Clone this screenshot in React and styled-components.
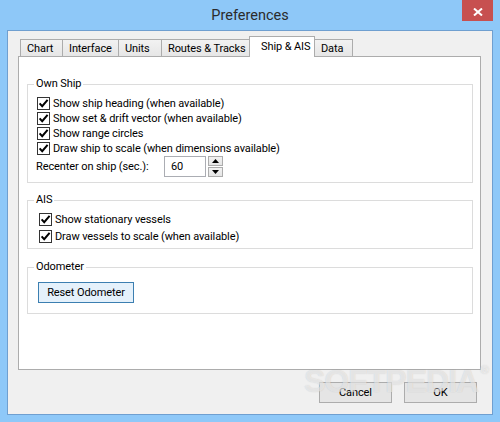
import React from "react";
import styled, { createGlobalStyle } from "styled-components";

const GlobalStyle = createGlobalStyle`
  html, body {
    margin: 0;
    padding: 0;
  }
  body {
    font-family: Roboto, "Noto Sans", sans-serif;
    font-size: 11px;
    letter-spacing: -0.1px;
    color: #000;
  }
  * {
    box-sizing: border-box;
  }
`;

const Frame = styled.div`
  position: relative;
  width: 500px;
  height: 422px;
  background: #8ec8f8;
  display: flex;
  flex-direction: column;
  overflow: hidden;
`;

const TitleBar = styled.div`
  height: 30px;
  display: grid;
  grid-template-columns: 1fr auto 1fr;
  align-items: start;
`;

const Title = styled.div`
  grid-column: 2;
  font-size: 14.5px;
  letter-spacing: 0;
  line-height: 31px;
  color: #2b2b2b;
`;

const CloseButton = styled.div`
  grid-column: 3;
  justify-self: end;
  width: 31px;
  height: 21px;
  margin-right: 7px;
  background: #c75050;
  display: flex;
  align-items: center;
  justify-content: center;
  padding-top: 2px;
`;

const Client = styled.div`
  height: 385px;
  margin: 0 7px 7px 7px;
  border: 1px solid #6f9fd0;
  background: #f0f0f0;
  padding: 5px 11px 11px 10px;
  display: flex;
  flex-direction: column;
`;

const TabStrip = styled.div`
  height: 20px;
  display: flex;
  align-items: flex-end;
  padding-left: 2px;
`;

const Tab = styled.div`
  position: relative;
  z-index: ${(p) => (p.$active ? 2 : 1)};
  width: ${(p) => p.$width}px;
  height: ${(p) => (p.$active ? 21 : 17)}px;
  margin-bottom: ${(p) => (p.$active ? -1 : 0)}px;
  margin-left: -1px;
  padding-left: ${(p) => (p.$active ? 11 : 6)}px;
  padding-bottom: ${(p) => (p.$active ? 2 : 0)}px;
  border: 1px solid #acacac;
  border-bottom: none;
  background: ${(p) =>
    p.$active ? "#ffffff" : "linear-gradient(#f2f2f2, #e6e6e6)"};
  display: flex;
  align-items: center;
  white-space: nowrap;

  &:first-child {
    margin-left: 0;
  }
`;

const Panel = styled.div`
  height: 314px;
  border: 1px solid #acacac;
  background: #ffffff;
  padding: 0 7px 0 8px;
  display: flex;
  flex-direction: column;
`;

const Group = styled.fieldset`
  margin: ${(p) => p.$top}px 0 0 0;
  padding: ${(p) => p.$padTop}px 8px ${(p) => p.$padBottom}px 8px;
  border: 1px solid #dcdcdc;
  min-width: 0;
`;

const Legend = styled.legend`
  padding: 0 2px;
  margin-left: -2px;
  line-height: 16px;
`;

const CheckRow = styled.label`
  display: flex;
  align-items: center;
  gap: 3px;
  height: ${(p) => p.$height}px;
  margin-left: ${(p) => p.$indent}px;
  white-space: nowrap;
`;

const Box = styled.span`
  width: 13px;
  height: 13px;
  border: 1px solid #333333;
  background: #ffffff;
  display: flex;
  align-items: center;
  justify-content: center;
  flex: none;
`;

const FieldRow = styled.div`
  display: flex;
  align-items: center;
  height: 21px;
`;

const FieldLabel = styled.span`
  width: 128px;
  white-space: nowrap;
`;

const NumberInput = styled.div`
  width: 42px;
  height: 21px;
  border: 1px solid #abadb3;
  padding-left: 6px;
  display: flex;
  align-items: center;
  background: #ffffff;
`;

const Spinner = styled.div`
  margin-left: 2px;
  display: flex;
  flex-direction: column;
  gap: 1px;
`;

const SpinButton = styled.div`
  width: 15px;
  height: 10px;
  border: 1px solid #acacac;
  background: linear-gradient(#f2f2f2, #e5e5e5);
  display: flex;
  align-items: center;
  justify-content: center;
`;

const ResetButton = styled.div`
  width: 96px;
  height: 21px;
  margin-left: 2px;
  border: 1px solid #3c7fb1;
  background: #e5f1fb;
  display: flex;
  align-items: center;
  justify-content: center;
`;

const Footer = styled.div`
  display: flex;
  justify-content: flex-end;
  gap: 12px;
  margin-top: 12px;
  padding-right: 4px;
`;

const DialogButton = styled.div`
  width: 73px;
  height: 21px;
  border: 1px solid #acacac;
  background: #e5e5e5;
  display: flex;
  align-items: center;
  justify-content: center;
`;

const Watermark = styled.div`
  position: absolute;
  left: 304px;
  top: 363px;
  font-family: "Liberation Sans", sans-serif;
  font-weight: 700;
  font-size: 32px;
  letter-spacing: -1px;
  color: rgba(255, 255, 255, 0.55);
  text-shadow: 0 0 1px rgba(120, 120, 120, 0.35);
  pointer-events: none;
  white-space: nowrap;

  sup {
    font-size: 12px;
    vertical-align: top;
    margin-left: 2px;
  }
`;

const tabs = [
  { name: "Chart", width: 43 },
  { name: "Interface", width: 57 },
  { name: "Units", width: 44 },
  { name: "Routes & Tracks", width: 89 },
  { name: "Ship & AIS", width: 66, active: true },
  { name: "Data", width: 39 },
];

const ownShip = [
  "Show ship heading (when available)",
  "Show set & drift vector (when available)",
  "Show range circles",
  "Draw ship to scale (when dimensions available)",
];

const ais = ["Show stationary vessels", "Draw vessels to scale (when available)"];

function Check() {
  return (
    <Box>
      <svg width="11" height="11" viewBox="0 0 11 11">
        <path
          d="M1.6 5.4 L4.2 8.2 L9.6 1.8"
          fill="none"
          stroke="#000"
          strokeWidth="2"
        />
      </svg>
    </Box>
  );
}

function Arrow({ up }) {
  return (
    <svg width="7" height="4" viewBox="0 0 7 4">
      <path d={up ? "M0 4 L3.5 0 L7 4 Z" : "M0 0 L3.5 4 L7 0 Z"} fill="#000" />
    </svg>
  );
}

export default function App() {
  return (
    <Frame>
      <GlobalStyle />
      <TitleBar>
        <Title>Preferences</Title>
        <CloseButton>
          <svg width="10" height="8" viewBox="0 0 10 8">
            <path d="M1 0.5 L9 7.5 M9 0.5 L1 7.5" stroke="#fff" strokeWidth="2" />
          </svg>
        </CloseButton>
      </TitleBar>
      <Client>
        <TabStrip>
          {tabs.map((t) => (
            <Tab key={t.name} $width={t.width} $active={t.active}>
              {t.name}
            </Tab>
          ))}
        </TabStrip>
        <Panel>
          <Group $top={19} $padTop={4} $padBottom={5}>
            <Legend>Own Ship</Legend>
            {ownShip.map((text) => (
              <CheckRow key={text} $height={15} $indent={1}>
                <Check />
                {text}
              </CheckRow>
            ))}
            <FieldRow>
              <FieldLabel>Recenter on ship (sec.):</FieldLabel>
              <NumberInput>60</NumberInput>
              <Spinner>
                <SpinButton>
                  <Arrow up />
                </SpinButton>
                <SpinButton>
                  <Arrow />
                </SpinButton>
              </Spinner>
            </FieldRow>
          </Group>
          <Group $top={9} $padTop={3} $padBottom={3}>
            <Legend>AIS</Legend>
            {ais.map((text) => (
              <CheckRow key={text} $height={17} $indent={3}>
                <Check />
                {text}
              </CheckRow>
            ))}
          </Group>
          <Group $top={10} $padTop={7} $padBottom={10}>
            <Legend>Odometer</Legend>
            <ResetButton>Reset Odometer</ResetButton>
          </Group>
        </Panel>
        <Footer>
          <DialogButton>Cancel</DialogButton>
          <DialogButton>OK</DialogButton>
        </Footer>
      </Client>
      <Watermark>
        SOFTPEDIA<sup>®</sup>
      </Watermark>
    </Frame>
  );
}
